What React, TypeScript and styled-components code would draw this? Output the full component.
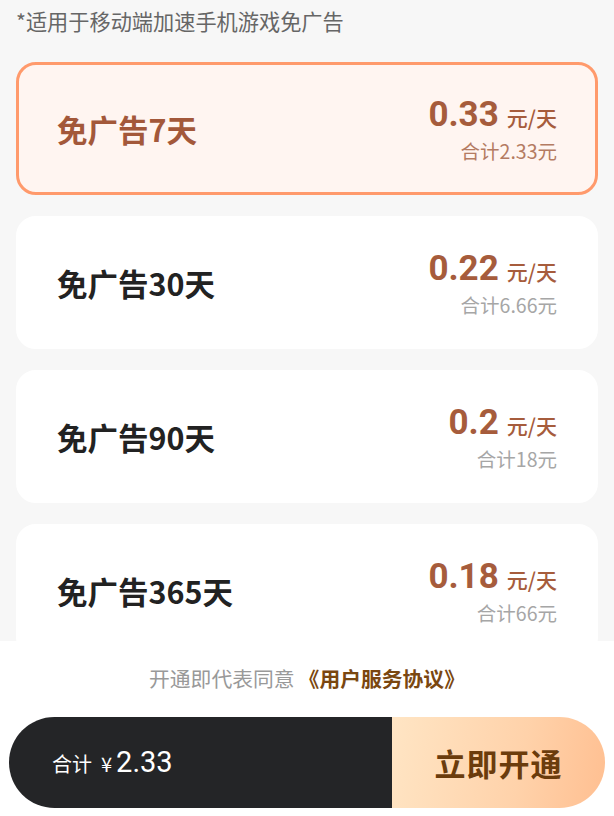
import React, { useState } from "react";
import styled, { createGlobalStyle } from "styled-components";

const GlobalStyle = createGlobalStyle`
  html, body {
    margin: 0;
    padding: 0;
    background: #f7f7f7;
    font-family: "Noto Sans CJK SC", "Noto Sans", sans-serif;
  }
  * { box-sizing: border-box; }
`;

const Page = styled.div`
  height: 816px;
  display: flex;
  flex-direction: column;
  overflow: hidden;
`;

const Scroll = styled.div`
  flex: 1;
  overflow: hidden;
  padding: 7px 16px 0 16px;
`;

const Note = styled.div`
  font-size: 21.2px;
  line-height: 28px;
  color: #666;
  margin-bottom: 27px;
`;

const List = styled.div`
  display: flex;
  flex-direction: column;
  gap: 21px;
`;

const Card = styled.div<{ $active: boolean }>`
  height: 133px;
  border-radius: 20px;
  display: flex;
  align-items: center;
  justify-content: space-between;
  padding: 0 38px;
  background: ${(p) => (p.$active ? "#fff5f1" : "#ffffff")};
  border: 3px solid ${(p) => (p.$active ? "#ff9a6c" : "#ffffff")};
  cursor: pointer;
`;

const Title = styled.div<{ $active: boolean }>`
  font-size: 30.5px;
  font-weight: 700;
  color: ${(p) => (p.$active ? "#a3583a" : "#222")};
`;

const PriceBox = styled.div`
  display: flex;
  flex-direction: column;
  align-items: flex-end;
`;

const PriceRow = styled.div`
  display: flex;
  align-items: baseline;
  color: #a65c3c;
`;

const Price = styled.span`
  font-family: Roboto, sans-serif;
  font-size: 35px;
  font-weight: 700;
  line-height: 42px;
`;

const Unit = styled.span`
  font-size: 21px;
  font-weight: 500;
  margin-left: 8px;
`;

const Total = styled.div<{ $active: boolean }>`
  font-size: 19.5px;
  line-height: 26px;
  margin-top: 2px;
  color: ${(p) => (p.$active ? "#b47b62" : "#a6a6a6")};
`;

const Footer = styled.div`
  height: 175px;
  background: #fff;
  display: flex;
  flex-direction: column;
  align-items: center;
  padding: 22px 9px 8px 9px;
`;

const Agreement = styled.div`
  font-size: 20.8px;
  line-height: 30px;
  color: #999;
  margin-bottom: 24px;
`;

const Link = styled.span`
  color: #7a4710;
  font-weight: 700;
  margin-left: 4px;
`;

const Bar = styled.div`
  width: 100%;
  height: 91px;
  border-radius: 46px;
  overflow: hidden;
  display: flex;
`;

const Sum = styled.div`
  flex: 0 0 383px;
  background: #242527;
  color: #fff;
  display: flex;
  align-items: baseline;
  padding: 0 0 0 43px;
  line-height: 91px;
`;

const SumLabel = styled.span`
  font-size: 20px;
  margin-right: 9px;
`;

const Yen = styled.span`
  font-size: 20px;
  margin-right: 4px;
`;

const SumValue = styled.span`
  font-family: Roboto, sans-serif;
  font-size: 29px;
`;

const Submit = styled.button`
  flex: 1;
  border: none;
  background: linear-gradient(100deg, #ffe5c4 0%, #ffd2aa 60%, #ffbf91 100%);
  color: #6b3c0c;
  font-family: inherit;
  font-size: 31px;
  font-weight: 700;
  letter-spacing: 1px;
  cursor: pointer;
`;

const plans = [
  { days: 7, price: "0.33", total: "2.33" },
  { days: 30, price: "0.22", total: "6.66" },
  { days: 90, price: "0.2", total: "18" },
  { days: 365, price: "0.18", total: "66" },
];

export default function App() {
  const [selected, setSelected] = useState(0);
  const current = plans[selected];

  return (
    <>
      <GlobalStyle />
      <Page>
        <Scroll>
          <Note>*适用于移动端加速手机游戏免广告</Note>
          <List>
            {plans.map((p, i) => (
              <Card key={p.days} $active={i === selected} onClick={() => setSelected(i)}>
                <Title $active={i === selected}>免广告{p.days}天</Title>
                <PriceBox>
                  <PriceRow>
                    <Price>{p.price}</Price>
                    <Unit>元/天</Unit>
                  </PriceRow>
                  <Total $active={i === selected}>合计{p.total}元</Total>
                </PriceBox>
              </Card>
            ))}
          </List>
        </Scroll>
        <Footer>
          <Agreement>
            开通即代表同意<Link>《用户服务协议》</Link>
          </Agreement>
          <Bar>
            <Sum>
              <SumLabel>合计</SumLabel>
              <Yen>¥</Yen>
              <SumValue>{current.total}</SumValue>
            </Sum>
            <Submit>立即开通</Submit>
          </Bar>
        </Footer>
      </Page>
    </>
  );
}
